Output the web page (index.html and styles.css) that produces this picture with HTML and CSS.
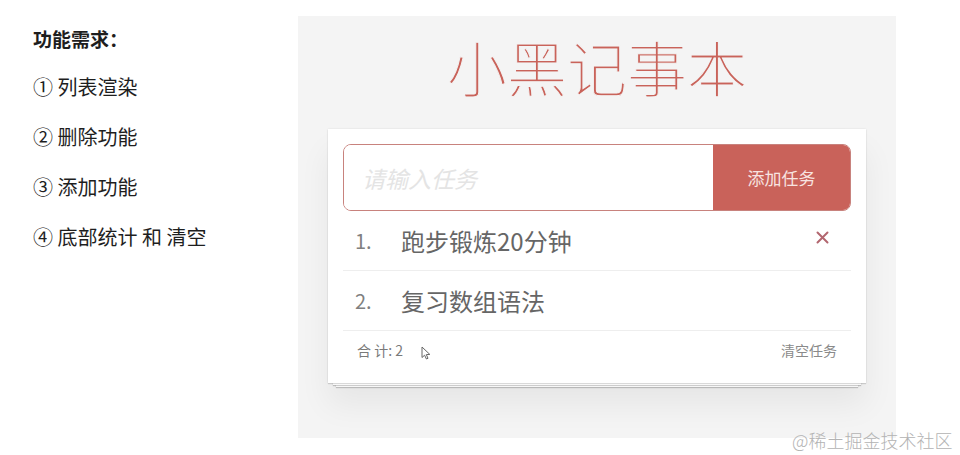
FILE: index.html
```html
<!DOCTYPE html>
<html lang="zh">
<head>
<meta charset="utf-8">
<link rel="stylesheet" href="styles.css">
</head>
<body>
<div class="page">
  <div class="reqs">
    <div class="req-title">功能需求：</div>
    <div class="req">① 列表渲染</div>
    <div class="req">② 删除功能</div>
    <div class="req">③ 添加功能</div>
    <div class="req">④ 底部统计 和 清空</div>
  </div>
  <div class="panel">
    <h1 class="title">小黑记事本</h1>
    <div class="card">
      <div class="input-row">
        <input class="task-input" type="text" placeholder="请输入任务">
        <button class="add-btn">添加任务</button>
      </div>
      <ul class="list">
        <li class="item">
          <span class="num">1.</span>
          <span class="text">跑步锻炼20分钟</span>
          <span class="del"><svg width="13" height="13" viewBox="0 0 13 13"><path d="M1.5 1.5 L11.5 11.5 M11.5 1.5 L1.5 11.5" stroke="#b2666f" stroke-width="2" stroke-linecap="round" fill="none"/></svg></span>
        </li>
        <li class="item">
          <span class="num">2.</span>
          <span class="text">复习数组语法</span>
        </li>
      </ul>
      <div class="footer">
        <span class="count">合 计: 2</span>
        <span class="cursor"><svg width="10" height="14" viewBox="0 0 10 14"><path d="M1 1 L1 11.5 L3.6 9.2 L5.4 13 L7 12.3 L5.3 8.6 L8.8 8.4 Z" fill="#fff" stroke="#666" stroke-width="1" stroke-linejoin="round"/></svg></span>
        <span class="clear">清空任务</span>
      </div>
    </div>
  </div>
</div>
<div class="watermark">@稀土掘金技术社区</div>
</body>
</html>
```
FILE: styles.css
```css
* { box-sizing: border-box; }
html, body {
  margin: 0;
  padding: 0;
  background: #fff;
  width: 960px;
  height: 455px;
  overflow: hidden;
  font-family: "Noto Sans CJK SC", "Noto Sans", sans-serif;
}
.page {
  display: flex;
  height: 455px;
}
.reqs {
  width: 298px;
  padding: 16px 0 0 33px;
  color: #1e1e1e;
}
.req-title {
  font-size: 19px;
  font-weight: 700;
  line-height: 46px;
}
.req {
  font-size: 20px;
  line-height: 50px;
}
.panel {
  margin-top: 16px;
  width: 598px;
  height: 422px;
  background: #f4f4f4;
  display: flex;
  flex-direction: column;
  align-items: center;
}
.title {
  margin: 20px 0 0;
  font-size: 60px;
  line-height: 60px;
  font-weight: 300;
  color: #c9635a;
  -webkit-text-stroke: 1px #f4f4f4;
  letter-spacing: 0;
}
.card {
  margin-top: 33px;
  width: 538px;
  background: #fff;
  padding: 15px 15px 0;
  box-shadow:
    0 0 2px rgba(0,0,0,.10),
    0 1px 1px rgba(0,0,0,.12),
    0 7px 0 -5px #fff,
    0 8px 1px -5px rgba(0,0,0,.2),
    0 12px 0 -8px #fff,
    0 13px 1px -8px rgba(0,0,0,.2),
    0 22px 30px rgba(0,0,0,.06);
}
.input-row {
  display: flex;
  height: 67px;
  border: 1px solid #c8827d;
  border-radius: 8px;
  overflow: hidden;
}
.task-input {
  flex: 1;
  border: none;
  outline: none;
  padding: 0 0 0 18px;
  font-family: inherit;
  font-size: 23px;
  color: #666;
  background: #fff;
}
.task-input::placeholder {
  color: #e4e4e4;
  font-style: italic;
}
.add-btn {
  width: 137px;
  border: none;
  background: #c9625a;
  color: #f8e4e1;
  font-family: inherit;
  font-size: 17px;
  padding: 0;
}
.list {
  list-style: none;
  margin: 0;
  padding: 0;
}
.item {
  display: flex;
  align-items: center;
  height: 60px;
  border-bottom: 1px solid #eeeeee;
  padding: 0 22px 0 12px;
}
.num {
  width: 46px;
  font-size: 20px;
  color: #808080;
}
.text {
  flex: 1;
  font-size: 24px;
  color: #666;
}
.del {
  display: flex;
  margin-top: -6px;
}
.footer {
  display: flex;
  align-items: flex-start;
  height: 52px;
  padding: 10px 14px 0;
  font-size: 14px;
  line-height: 18px;
  color: #888;
}
.count { color: #7a7a7a; }
.cursor {
  margin: 5px 0 0 18px;
  display: flex;
}
.clear {
  margin-left: auto;
  color: #8a8a8a;
}
.watermark {
  position: absolute;
  left: 792px;
  top: 428px;
  font-size: 18px;
  line-height: 24px;
  color: #b3b3b3;
  font-family: "Noto Sans CJK SC", "Noto Sans", sans-serif;
  font-weight: 300;
  letter-spacing: 0;
}
```
